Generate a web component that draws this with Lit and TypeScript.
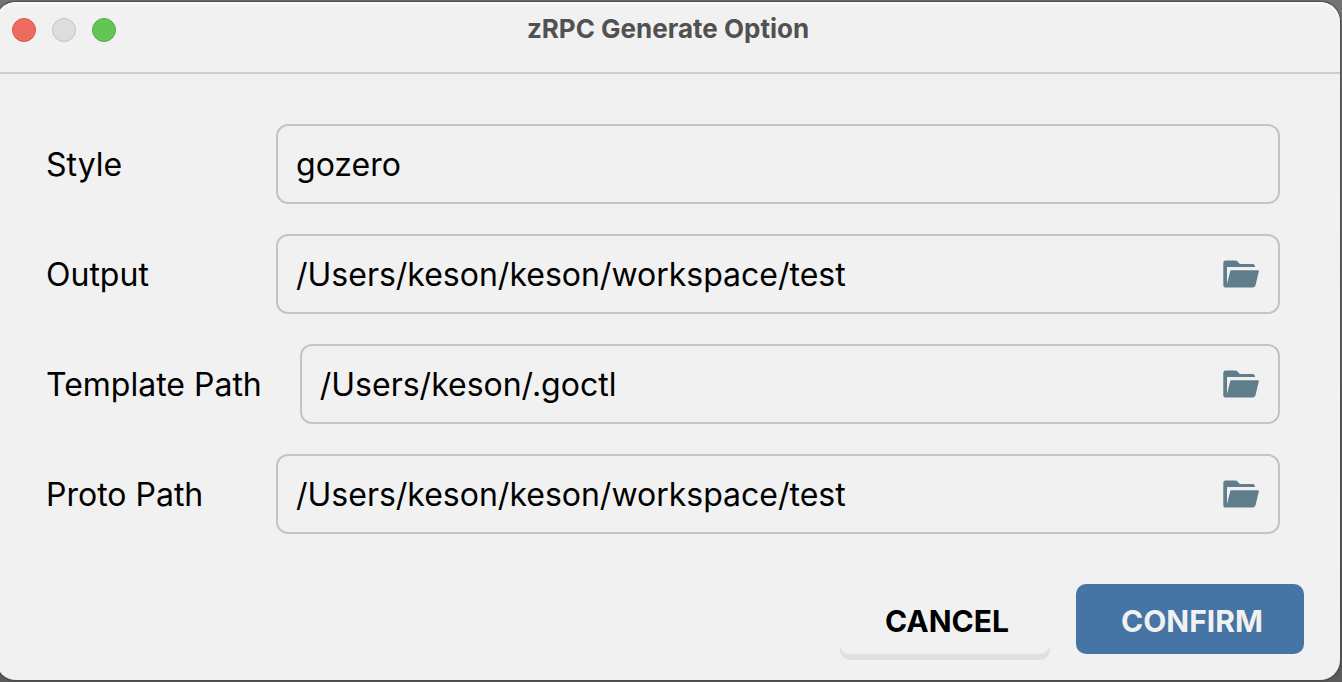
import { LitElement, html, css, svg } from "lit";
import { customElement, state } from "lit/decorators.js";

interface Field {
  id: string;
  label: string;
  value: string;
  browse: boolean;
}

const folderIcon = svg`
  <svg viewBox="0 0 36 28" width="36" height="28" aria-hidden="true">
    <path fill="#607d8b" d="M2.6 .5H12.6Q13.6 .5 14.3 1.2L16.8 3.9H29.6Q32 3.9 32 6.9H4.4Q4 6.9 4 7.4V24L7.2 11.2Q7.4 10.3 8.4 10.3H34.9Q36.1 10.3 35.8 11.5L32.6 25Q31.9 27.6 29.6 27.6H3Q.3 27.6 .3 24.9V2.9Q.3 .5 2.6 .5Z"/>
  </svg>`;

@customElement("app-root")
export class AppRoot extends LitElement {
  static styles = css`
    :host {
      display: flex;
      min-height: 100vh;
      box-sizing: border-box;
      padding: 2px 2px 2px 0;
      overflow: hidden;
      background: linear-gradient(#747474, #5a5a5a);
      font-family: Inter, "Liberation Sans", sans-serif;
      color: #000;
    }
    .window {
      flex: 1;
      display: flex;
      flex-direction: column;
      margin-left: -4px;
      padding-left: 4px;
      border-radius: 20px;
      overflow: hidden;
      background: #f1f1f1;
      box-shadow: 0 0 2px 1px #444, inset 0 2px 1px #fafafa;
    }
    .titlebar {
      display: grid;
      grid-template-columns: 1fr auto 1fr;
      padding: 10px 16px 24px 12px;
      border-bottom: 2px solid #cdcdcd;
    }
    .lights {
      display: flex;
      gap: 16px;
      padding-top: 6px;
    }
    .light {
      width: 24px;
      height: 24px;
      box-sizing: border-box;
      padding: 0;
      border: 1px solid;
      border-radius: 50%;
    }
    .close { background: #ed6b5f; border-color: #d9564b; }
    .minimize { background: #dddddd; border-color: #c3c3c3; }
    .zoom { background: #62c655; border-color: #50ad42; }
    .title {
      margin: 0;
      padding-bottom: 2px;
      font-size: 26px;
      line-height: 34px;
      font-weight: 700;
      color: #515151;
    }
    .form {
      flex: 1;
      display: flex;
      flex-direction: column;
      padding-top: 50px;
    }
    .fields {
      display: flex;
      flex-direction: column;
      gap: 30px;
      padding: 0 60px 0 46px;
    }
    .row {
      display: flex;
      align-items: center;
      gap: 38px;
    }
    .label {
      min-width: 192px;
      padding-top: 2px;
      font-size: 32px;
      line-height: 40px;
      white-space: nowrap;
    }
    .box {
      flex: 1;
      min-width: 0;
      display: flex;
      align-items: center;
      box-sizing: border-box;
      height: 80px;
      padding: 0 19px 0 18px;
      border: 2px solid #c4c4c4;
      border-radius: 12px;
    }
    .input {
      flex: 1;
      min-width: 0;
      padding: 2px 0 0;
      border: 0;
      outline: 0;
      background: none;
      color: inherit;
      font: inherit;
      font-size: 32px;
      line-height: 40px;
    }
    .browse {
      display: flex;
      padding: 0;
      border: 0;
      background: none;
    }
    .actions {
      display: flex;
      justify-content: flex-end;
      gap: 26px;
      padding: 50px 36px 26px;
    }
    .button {
      height: 70px;
      padding: 4px 0 0 4px;
      border: 0;
      border-radius: 10px;
      font: inherit;
      font-size: 30px;
      font-weight: 700;
    }
    .cancel {
      width: 210px;
      background: #f1f1f1;
      color: #000;
      box-shadow: 0 6px 0 #e0e0e0;
    }
    .confirm {
      width: 228px;
      background: #4574a5;
      color: #f1f1f1;
    }
  `;

  @state() private fields: Field[] = [
    { id: "style", label: "Style", value: "gozero", browse: false },
    { id: "output", label: "Output", value: "/Users/keson/keson/workspace/test", browse: true },
    { id: "template", label: "Template Path", value: "/Users/keson/.goctl", browse: true },
    { id: "proto", label: "Proto Path", value: "/Users/keson/keson/workspace/test", browse: true },
  ];

  render() {
    return html`
      <main class="window">
        <header class="titlebar">
          <div class="lights">
            <button class="light close" aria-label="Close"></button>
            <button class="light minimize" aria-label="Minimize" disabled></button>
            <button class="light zoom" aria-label="Zoom"></button>
          </div>
          <h1 class="title">zRPC Generate Option</h1>
        </header>
        <form class="form" @submit=${(e: Event) => e.preventDefault()}>
          <div class="fields">
            ${this.fields.map(
              (f) => html`
                <div class="row">
                  <label class="label" for=${f.id}>${f.label}</label>
                  <div class="box">
                    <input class="input" id=${f.id} type="text" spellcheck="false" .value=${f.value} />
                    ${f.browse
                      ? html`<button class="browse" type="button" aria-label="Browse ${f.label}">${folderIcon}</button>`
                      : null}
                  </div>
                </div>
              `
            )}
          </div>
          <div class="actions">
            <button class="button cancel" type="button">CANCEL</button>
            <button class="button confirm" type="submit">CONFIRM</button>
          </div>
        </form>
      </main>
    `;
  }
}
